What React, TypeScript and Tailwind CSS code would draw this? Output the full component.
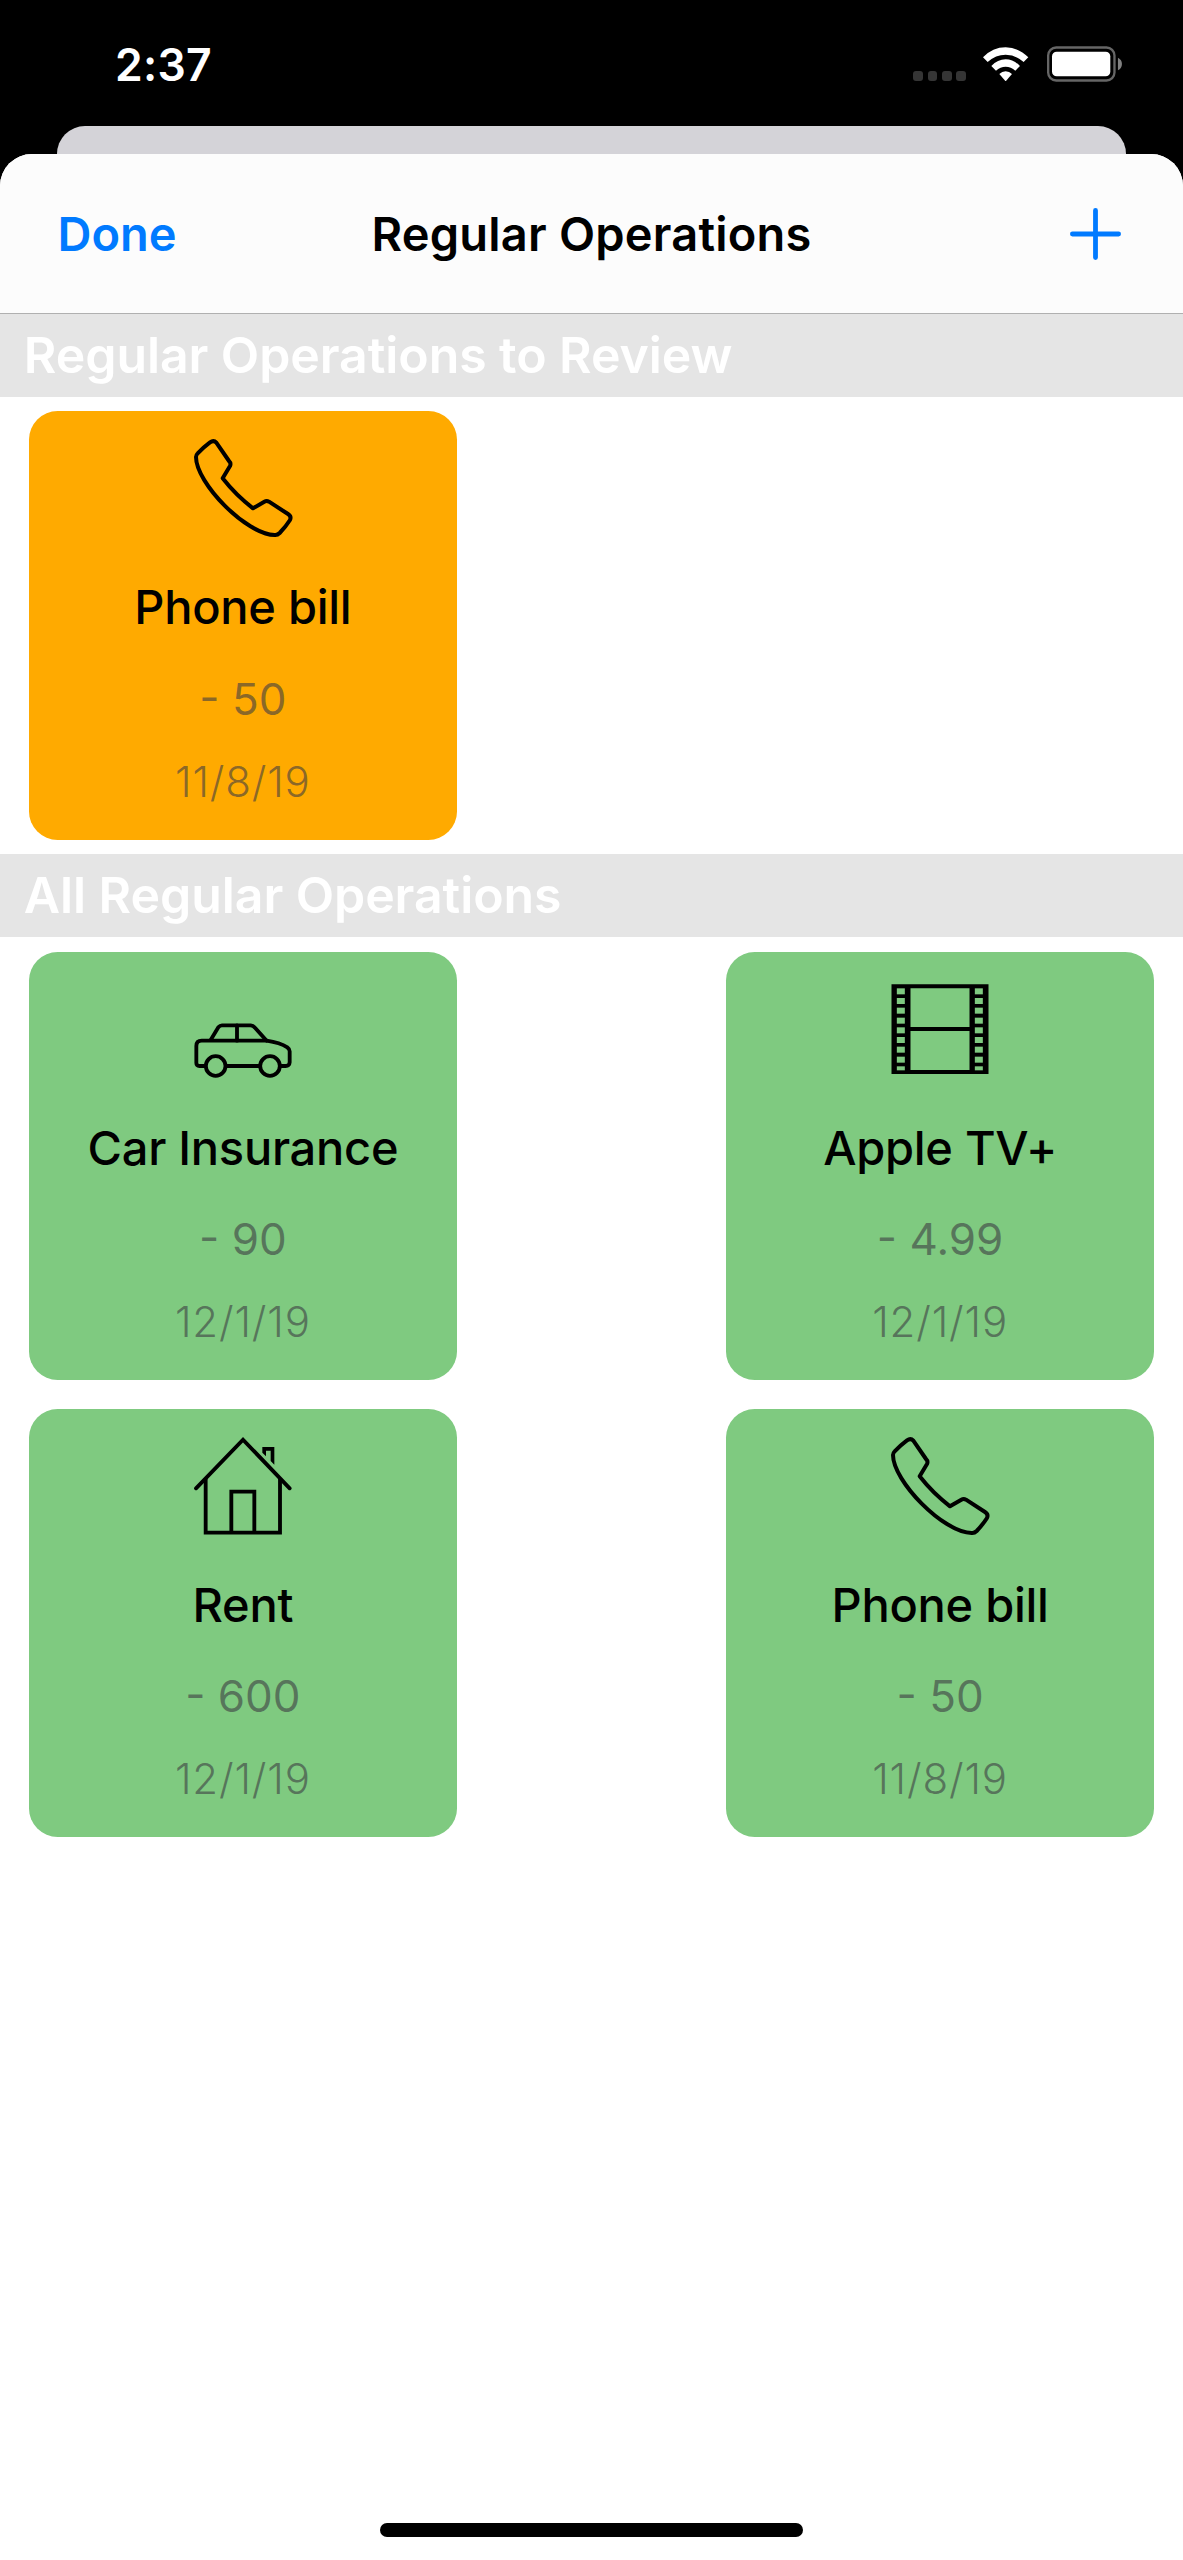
import type { ReactNode } from 'react';
import clsx from 'clsx';

type IconName = 'phone' | 'car' | 'film' | 'house';

type Operation = {
  icon: IconName;
  name: string;
  amount: string;
  date: string;
};

const toReview: Operation[] = [
  { icon: 'phone', name: 'Phone bill', amount: '- 50', date: '11/8/19' },
];

const allOperations: Operation[] = [
  { icon: 'car', name: 'Car Insurance', amount: '- 90', date: '12/1/19' },
  { icon: 'film', name: 'Apple TV+', amount: '- 4.99', date: '12/1/19' },
  { icon: 'house', name: 'Rent', amount: '- 600', date: '12/1/19' },
  { icon: 'phone', name: 'Phone bill', amount: '- 50', date: '11/8/19' },
];

// y positions of the perforations on both edges of the film strip
const holes = [28, 57, 86, 116, 145, 174, 203, 233];

const icons: Record<IconName, ReactNode> = {
  phone: (
    <path
      strokeWidth="12"
      d="M9 57Q9 51 14 46Q32 27 51 13Q62 5 70 14L108 69Q115 76 111 84L89 121Q128 171 180 211L214 191Q221 187 228 191L285 228Q296 235 291 246Q279 265 260 285Q253 292 245 291C160 290 9 135 9 57Z"
    />
  ),
  car: (
    <g strokeWidth="11.5">
      <path d="M53 183L76 145Q81 139 87 139H173Q181 140 186 146L221 185" />
      <path d="M37 261H19Q10 261 10 252V201Q10 185 26 185H221Q261 191 283 205Q290 210 290 217V250Q289 261 278 261H262" />
      <path d="M101 261H199M132 139V185" />
      <circle cx="68" cy="261" r="29.5" />
      <circle cx="231" cy="261" r="29.5" />
    </g>
  ),
  film: (
    <>
      <path
        fill="currentColor"
        fillRule="evenodd"
        stroke="none"
        d="M4.500 16H295.500V285H4.500ZM61.500 28V144H238.500V28ZM61.500 156V273H238.500V156Z"
      />
      <g className="fill-[#7fca80]" stroke="none">
        {holes.map((y) => (
          <g key={y}>
            <rect x="20.500" y={y} width="24" height="18" />
            <rect x="254.500" y={y} width="24" height="18" />
          </g>
        ))}
        <rect x="20.500" y="262" width="24" height="12" />
        <rect x="254.500" y="262" width="24" height="12" />
      </g>
    </>
  ),
  house: (
    <g strokeWidth="11.5">
      <path d="M9 157L150 11L290 157" strokeLinejoin="miter" />
      <path d="M38 127V290H261V127M115 290V167H184V290" strokeLinecap="butt" strokeLinejoin="miter" />
      <path fill="currentColor" stroke="none" d="M208 33H244V86L233 75V44H219V61L208 50Z" />
    </g>
  ),
};

function OperationIcon({ name }: { name: IconName }) {
  return (
    <svg
      viewBox="0 0 300 300"
      className="size-[100px]"
      fill="none"
      stroke="currentColor"
      strokeLinecap="round"
      strokeLinejoin="round"
    >
      {icons[name]}
    </svg>
  );
}

function OperationCard({ operation, review }: { operation: Operation; review?: boolean }) {
  return (
    <div
      className={clsx(
        'flex size-[428.6px] flex-col items-center rounded-[28.6px] pt-[27px] text-black',
        review ? 'bg-[#ffaa00]' : 'bg-[#7fca80]',
      )}
    >
      <OperationIcon name={operation.icon} />
      <p className="mt-[39px] text-[47px] leading-[60px] font-medium tracking-[-0.27px]">{operation.name}</p>
      <p className="mt-[33.5px] text-[44px] leading-[56px] text-[#3c3c43]/60">{operation.amount}</p>
      <p className="mt-[28.7px] text-[42px] leading-[52px] font-light tracking-[0.85px] text-[#3c3c43]/60">
        {operation.date}
      </p>
    </div>
  );
}

function Section({ title, operations, review }: { title: string; operations: Operation[]; review?: boolean }) {
  return (
    <section>
      <h2 className="flex h-[82.9px] items-center bg-[#e5e5e5] pb-[2px] pl-[23.8px] text-[50px] leading-[60px] font-semibold tracking-[-0.08px] text-white">
        {title}
      </h2>
      <div className="grid grid-cols-[428.6px_428.6px] justify-between gap-y-[28.6px] px-[28.6px] py-[14.3px]">
        {operations.map((operation) => (
          <OperationCard key={operation.name} operation={operation} review={review} />
        ))}
      </div>
    </section>
  );
}

function StatusBar() {
  return (
    <div className="flex h-[125.6px] justify-between pt-[36.7px] pr-[61px] pl-[115px] text-white">
      <span className="text-[44.5px] leading-[56px] font-semibold tracking-[0.26px]">2:37</span>
      <div className="flex h-[45px] items-end">
        <div className="mb-[0.6px] flex gap-[4.6px]">
          <span className="size-[9.7px] rounded-[3px] bg-[#353535]" />
          <span className="size-[9.7px] rounded-[3px] bg-[#353535]" />
          <span className="size-[9.7px] rounded-[3px] bg-[#353535]" />
          <span className="size-[9.7px] rounded-[3px] bg-[#353535]" />
        </div>
        <svg viewBox="0 0 136 104" className="mb-[0.3px] ml-[17.5px] h-[34.7px] w-[45.3px]" fill="currentColor">
          <path d="M0 31Q29 1 68 1T136 31L122 45Q98 23 68 23T14 45Z" />
          <path d="M25 57Q44 37 68 37T111 57L97 71Q84 59 68 59T39 71Z" />
          <path d="M49 81Q57 73 68 73T87 81L68 103Z" />
        </svg>
        <svg viewBox="0 0 226 108" className="-mb-[0.5px] ml-[18px] h-[36px] w-[75.3px]" fill="none">
          <rect x="3.500" y="4.500" width="199" height="99" rx="24" stroke="#666" strokeWidth="7" />
          <rect x="15" y="17" width="175" height="74" rx="14" fill="#fff" />
          <path d="M213 35Q225 41 225 54T213 73Z" fill="#808080" />
        </svg>
      </div>
    </div>
  );
}

export default function App() {
  return (
    <div className="flex h-[2560px] w-[1183px] flex-col overflow-hidden bg-black font-[Inter,sans-serif]">
      <StatusBar />
      <div className="mx-[57.3px] h-[28.7px] shrink-0 rounded-t-[28px] bg-[#d4d3d8]" />
      <main className="flex flex-1 flex-col rounded-t-[32px] bg-white">
        <header className="grid h-[160px] grid-cols-[1fr_auto_1fr] items-center rounded-t-[32px] border-b border-[#b0b0b0] bg-[#fcfcfc] px-[57.5px] text-[47px] leading-[60px] font-semibold">
          <button className="justify-self-start text-[#007aff]">Done</button>
          <h1 className="tracking-[0.2px]">Regular Operations</h1>
          <button className="mr-[5px] justify-self-end text-[#007aff]">
            <svg
              viewBox="0 0 51 52"
              className="h-[52px] w-[51px]"
              stroke="currentColor"
              strokeWidth="4.800"
              strokeLinecap="round"
            >
              <path d="M25.500 2.400V49.600M2.400 26H48.600" />
            </svg>
          </button>
        </header>
        <Section title="Regular Operations to Review" operations={toReview} review />
        <Section title="All Regular Operations" operations={allOperations} />
        <div className="mx-auto mt-auto mb-[23px] h-[14.5px] w-[423px] rounded-full bg-black" />
      </main>
    </div>
  );
}
